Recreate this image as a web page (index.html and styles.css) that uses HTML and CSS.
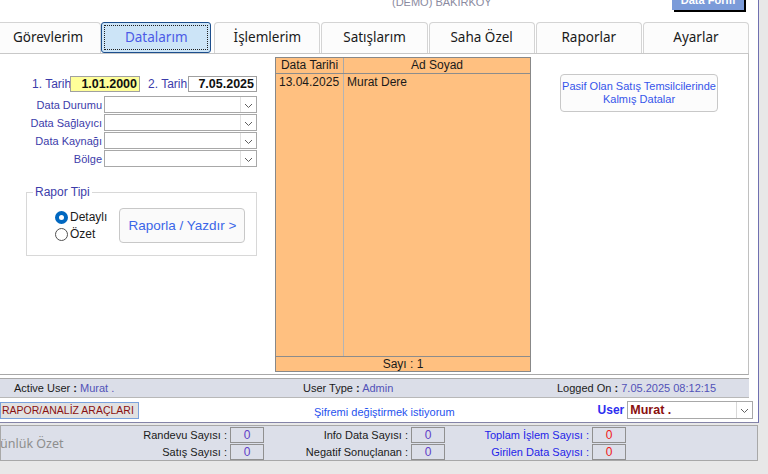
FILE: index.html
```html
<!DOCTYPE html>
<html lang="tr">
<head>
<meta charset="utf-8">
<title>Datalarım</title>
<link rel="stylesheet" href="styles.css">
</head>
<body>
<div class="screen">
  <div class="frame">
    <div class="top">
      <span class="demo">(DEMO) BAKIRKÖY</span>
      <div class="topbtn">Data Form</div>
    </div>
    <div class="tabs">
      <div class="tab">Görevlerim</div>
      <div class="tab active"><span class="focus">Datalarım</span></div>
      <div class="tab">İşlemlerim</div>
      <div class="tab">Satışlarım</div>
      <div class="tab">Saha Özel</div>
      <div class="tab">Raporlar</div>
      <div class="tab">Ayarlar</div>
    </div>
    <div class="panel">
      <div class="left">
        <div class="daterow">
          <span class="lbl l1">1. Tarih</span>
          <span class="date yellow">1.01.2000</span>
          <span class="lbl l2">2. Tarih</span>
          <span class="date white">7.05.2025</span>
        </div>
        <div class="selects">
          <div class="srow"><span class="slbl">Data Durumu</span><span class="combo"><span class="arrow"><svg width="9" height="6" viewBox="0 0 9 6"><polyline points="1,1 4.5,4.5 8,1" fill="none" stroke="#606060" stroke-width="1"/></svg></span></span></div>
          <div class="srow"><span class="slbl">Data Sağlayıcı</span><span class="combo"><span class="arrow"><svg width="9" height="6" viewBox="0 0 9 6"><polyline points="1,1 4.5,4.5 8,1" fill="none" stroke="#606060" stroke-width="1"/></svg></span></span></div>
          <div class="srow"><span class="slbl">Data Kaynağı</span><span class="combo"><span class="arrow"><svg width="9" height="6" viewBox="0 0 9 6"><polyline points="1,1 4.5,4.5 8,1" fill="none" stroke="#606060" stroke-width="1"/></svg></span></span></div>
          <div class="srow"><span class="slbl">Bölge</span><span class="combo"><span class="arrow"><svg width="9" height="6" viewBox="0 0 9 6"><polyline points="1,1 4.5,4.5 8,1" fill="none" stroke="#606060" stroke-width="1"/></svg></span></span></div>
        </div>
        <div class="fieldset">
          <span class="legend">Rapor Tipi</span>
          <div class="radios">
            <div class="radio"><span class="dot on"></span>Detaylı</div>
            <div class="radio"><span class="dot"></span>Özet</div>
          </div>
          <div class="rbtn">Raporla / Yazdır &gt;</div>
        </div>
      </div>
      <div class="grid">
        <div class="ghead">
          <span class="c1">Data Tarihi</span>
          <span class="c2">Ad Soyad</span>
        </div>
        <div class="gbody">
          <div class="col1"><div class="cell">13.04.2025</div></div>
          <div class="col2"><div class="cell">Murat Dere</div></div>
        </div>
        <div class="gfoot">Sayı : 1</div>
      </div>
      <div class="pasif">Pasif Olan Satış Temsilcilerinde<br>Kalmış Datalar</div>
    </div>
    <div class="status">
      <span class="st st1"><span class="k">Active User <b>:</b></span> <span class="v">Murat .</span></span>
      <span class="st st2"><span class="k">User Type <b>:</b></span> <span class="v">Admin</span></span>
      <span class="st st3"><span class="k">Logged On <b>:</b></span> <span class="v">7.05.2025 08:12:15</span></span>
    </div>
    <div class="brow">
      <div class="rapor">RAPOR/ANALİZ ARAÇLARI</div>
      <span class="link">Şifremi değiştirmek istiyorum</span>
      <span class="ulbl">User</span>
      <span class="ucombo"><span class="uval">Murat .</span><span class="arrow"><svg width="9" height="6" viewBox="0 0 9 6"><polyline points="1,1 4.5,4.5 8,1" fill="none" stroke="#606060" stroke-width="1"/></svg></span></span>
    </div>
  </div>
  <div class="summary">
    <span class="title">ünlük Özet</span>
    <div class="sgroup g1">
      <div class="sr"><span class="sl">Randevu Sayısı :</span><span class="box purple">0</span></div>
      <div class="sr"><span class="sl">Satış Sayısı :</span><span class="box purple">0</span></div>
    </div>
    <div class="sgroup g2">
      <div class="sr"><span class="sl">Info Data Sayısı :</span><span class="box purple">0</span></div>
      <div class="sr"><span class="sl">Negatif Sonuçlanan :</span><span class="box purple">0</span></div>
    </div>
    <div class="sgroup g3">
      <div class="sr"><span class="sl blue">Toplam İşlem Sayısı :</span><span class="box red">0</span></div>
      <div class="sr"><span class="sl blue">Girilen Data Sayısı :</span><span class="box red">0</span></div>
    </div>
  </div>
</div>
</body>
</html>
```
FILE: styles.css
```css
* { box-sizing: border-box; }
html, body { margin: 0; padding: 0; }
body {
  width: 768px; height: 474px; overflow: hidden;
  background: #e8e8e8;
  font-family: "Liberation Sans", Arial, sans-serif;
  font-size: 11px;
  color: #1a1a1a;
  white-space: nowrap;
}
.screen {
  width: 768px; height: 474px;
  display: flex; flex-direction: column;
}
.frame {
  width: 759px; height: 423px;
  background: #ffffff;
  border-right: 1px solid #7070b0;
  border-bottom: 1px solid #8484a8;
  display: flex; flex-direction: column;
  overflow: hidden;
}
.top {
  height: 22px; flex: none;
  display: flex; align-items: flex-start;
}
.demo {
  margin-left: 392px; margin-top: -4px;
  width: 90px;
  font-size: 11px; color: #8a8aa0; line-height: 13px;
}
.topbtn {
  margin-left: 190px; margin-top: -7px;
  width: 72px; height: 17px;
  background: #7b9bd9;
  box-shadow: 2px 2px 0 #000;
  color: #fff; font-weight: bold; font-size: 11px;
  text-align: center; line-height: 14px;
}
.tabs {
  height: 31px; flex: none;
  display: flex; gap: 1px;
  margin-left: -5px; width: 754px;
}
.tab {
  flex: 1;
  height: 31px;
  border: 1px solid #d4d4d4;
  border-bottom: none;
  border-radius: 4px 4px 0 0;
  background: #fcfcfc;
  font-family: "Noto Sans", "Open Sans", sans-serif;
  font-size: 13.5px;
  color: #1a1a1a;
  display: flex; align-items: center; justify-content: center;
  padding-bottom: 2px;
}
.tab.active {
  background: #cce4f7;
  border: 1px solid #1d4f8d;
  border-radius: 3px;
  color: #4b5be6;
  padding: 2px;
  margin: 0 2px 0 -1px;
}
.focus {
  flex: 1; align-self: stretch;
  border: 1px dotted #202020;
  display: flex; align-items: center; justify-content: center;
  padding-bottom: 1px;
}
.panel {
  width: 749px; height: 322px; flex: none;
  border-top: 1px solid #c8c8c8;
  border-right: 1px solid #c0c0c0;
  border-bottom: 1px solid #a8a8a8;
  display: flex; align-items: flex-start;
}
.left {
  width: 257px; flex: none;
  margin-top: 22px;
}
.lbl { color: #3c3caa; font-size: 12px; }
.daterow {
  display: flex; align-items: center; height: 16px;
}
.l1 { margin-left: 32px; width: 38px; }
.l2 { margin-left: 8px; width: 40px; }
.date {
  height: 16px; border: 1px solid #a0a0a0;
  font-weight: bold; font-size: 12.5px;
  text-align: right; line-height: 14px; padding-right: 2px;
  color: #101010;
}
.yellow { width: 70px; background: #ffff99; }
.white { width: 69px; background: #fff; }
.selects {
  margin-top: 4px;
  display: flex; flex-direction: column; gap: 1px;
}
.srow { display: flex; align-items: center; height: 17px; }
.slbl {
  width: 104px; padding-right: 2px;
  text-align: right; color: #3c3caa; font-size: 11px;
}
.combo {
  width: 153px; height: 17px;
  border: 1px solid #a8a8a8;
  background: #fff;
  display: flex; justify-content: flex-end;
}
.arrow {
  width: 16px; height: 15px;
  border-left: 1px solid #e0e0e0;
  display: flex; align-items: center; justify-content: center;
  padding-top: 3px;
}
.fieldset {
  position: relative;
  margin-top: 25px; margin-left: 26px;
  width: 231px; height: 64px;
  border: 1px solid #d8d8d8;
  display: flex; align-items: center;
}
.legend {
  position: absolute; left: 6px; top: -8px;
  background: #fff; padding: 0 2px;
  color: #3c3caa; font-size: 12px;
}
.radios {
  margin-left: 28px; margin-top: 3px;
  display: flex; flex-direction: column; gap: 3px;
}
.radio {
  display: flex; align-items: center; gap: 2px;
  font-size: 12px; color: #1a1a1a; height: 14px;
}
.dot {
  width: 13px; height: 13px; border-radius: 50%;
  border: 1px solid #505050; background: #fff;
}
.dot.on {
  border: 4px solid #0067c0; background: #fff;
}
.rbtn {
  margin-left: 12px; margin-top: 3px;
  width: 126px; height: 35px;
  border: 1px solid #c8c8c8; border-radius: 4px;
  background: #fafafa;
  color: #3b66e8; font-size: 13.5px;
  display: flex; align-items: center; justify-content: center;
}
.grid {
  margin-left: 18px; margin-top: 3px;
  width: 256px; height: 315px;
  border: 1px solid #888;
  background: #ffc080;
  display: flex; flex-direction: column;
  font-size: 12px;
}
.ghead {
  height: 16px; flex: none;
  border-bottom: 1px solid #8c8c8c;
  display: flex;
}
.ghead span { text-align: center; line-height: 15px; }
.c1 { width: 68px; border-right: 1px solid #a8a8a8; }
.c2 { flex: 1; }
.gbody { flex: 1; display: flex; }
.col1 { width: 68px; border-right: 1px solid #b4b4b4; }
.col2 { flex: 1; }
.cell { padding: 1px 0 0 3px; line-height: 14px; }
.gfoot {
  height: 15px; flex: none;
  border-top: 1px solid #8c8c8c;
  text-align: center; line-height: 14px;
}
.pasif {
  margin-left: 29px; margin-top: 20px;
  width: 158px; height: 38px;
  border: 1px solid #c8c8c8; border-radius: 4px;
  background: #fcfcfc;
  color: #3555ea; font-size: 11px; line-height: 13px;
  display: flex; align-items: center; justify-content: center; text-align: center;
  padding-bottom: 1px;
}
.status {
  margin-top: 3px;
  width: 749px; height: 20px; flex: none;
  background: #dbdee8;
  border-top: 1px solid #a8a8a8;
  border-bottom: 1px solid #b8b8b8;
  display: flex; align-items: center;
  font-size: 11px;
}
.st .k { color: #1a1a1a; }
.st .v { color: #5252b8; }
.st1 { margin-left: 14px; width: 289px; }
.st2 { width: 254px; }
.brow {
  height: 24px; flex: none;
  display: flex; align-items: center;
  padding-bottom: 4px;
}
.rapor {
  width: 139px; height: 17px; margin-top: 4px; flex: none;
  background: #e1e1e1;
  border: 1px solid #7aa2dc;
  color: #8a1010; font-size: 10.5px;
  line-height: 15px; padding-left: 1px;
  overflow: hidden;
}
.link {
  margin-left: 175px; margin-top: 7px;
  color: #1f52ee; font-size: 11px;
}
.ulbl {
  margin-left: 143px; margin-top: 4px;
  color: #2d2df0; font-weight: bold; font-size: 12px;
}
.ucombo {
  margin-left: 3px; margin-top: 3px;
  width: 126px; height: 18px;
  border: 1px solid #a8a8a8; background: #fff;
  display: flex; justify-content: space-between;
}
.uval {
  color: #8a1010; font-weight: bold; font-size: 12.5px;
  padding-left: 2px; line-height: 16px;
}
.ucombo .arrow { height: 16px; border-left: 1px solid #d8d8d8; }
.summary {
  margin-top: 2px;
  width: 758px; height: 36px;
  background: #dcdfe9;
  border: 1px solid #a8a8a8;
  display: flex; align-items: center;
  font-size: 11px;
}
.title {
  width: 140px; margin-left: -1px; margin-top: 1px; flex: none;
  color: #8e8e8e; font-size: 12.5px;
  font-family: "Noto Sans", "Open Sans", sans-serif;
}
.sgroup {
  display: flex; flex-direction: column; gap: 1px;
  align-items: flex-end; flex: none;
}
.sr { display: flex; align-items: center; height: 16px; }
.sl { padding-right: 3px; color: #1a1a1a; }
.sl.blue { color: #2424e8; }
.box {
  width: 34px; height: 16px;
  border: 1px solid #909090;
  text-align: center; line-height: 14px; font-size: 12px;
}
.box.purple { color: #6040c8; }
.box.red { color: #f01818; }
.g1 { width: 124px; }
.g2 { width: 181px; }
.g3 { width: 181px; }
```
